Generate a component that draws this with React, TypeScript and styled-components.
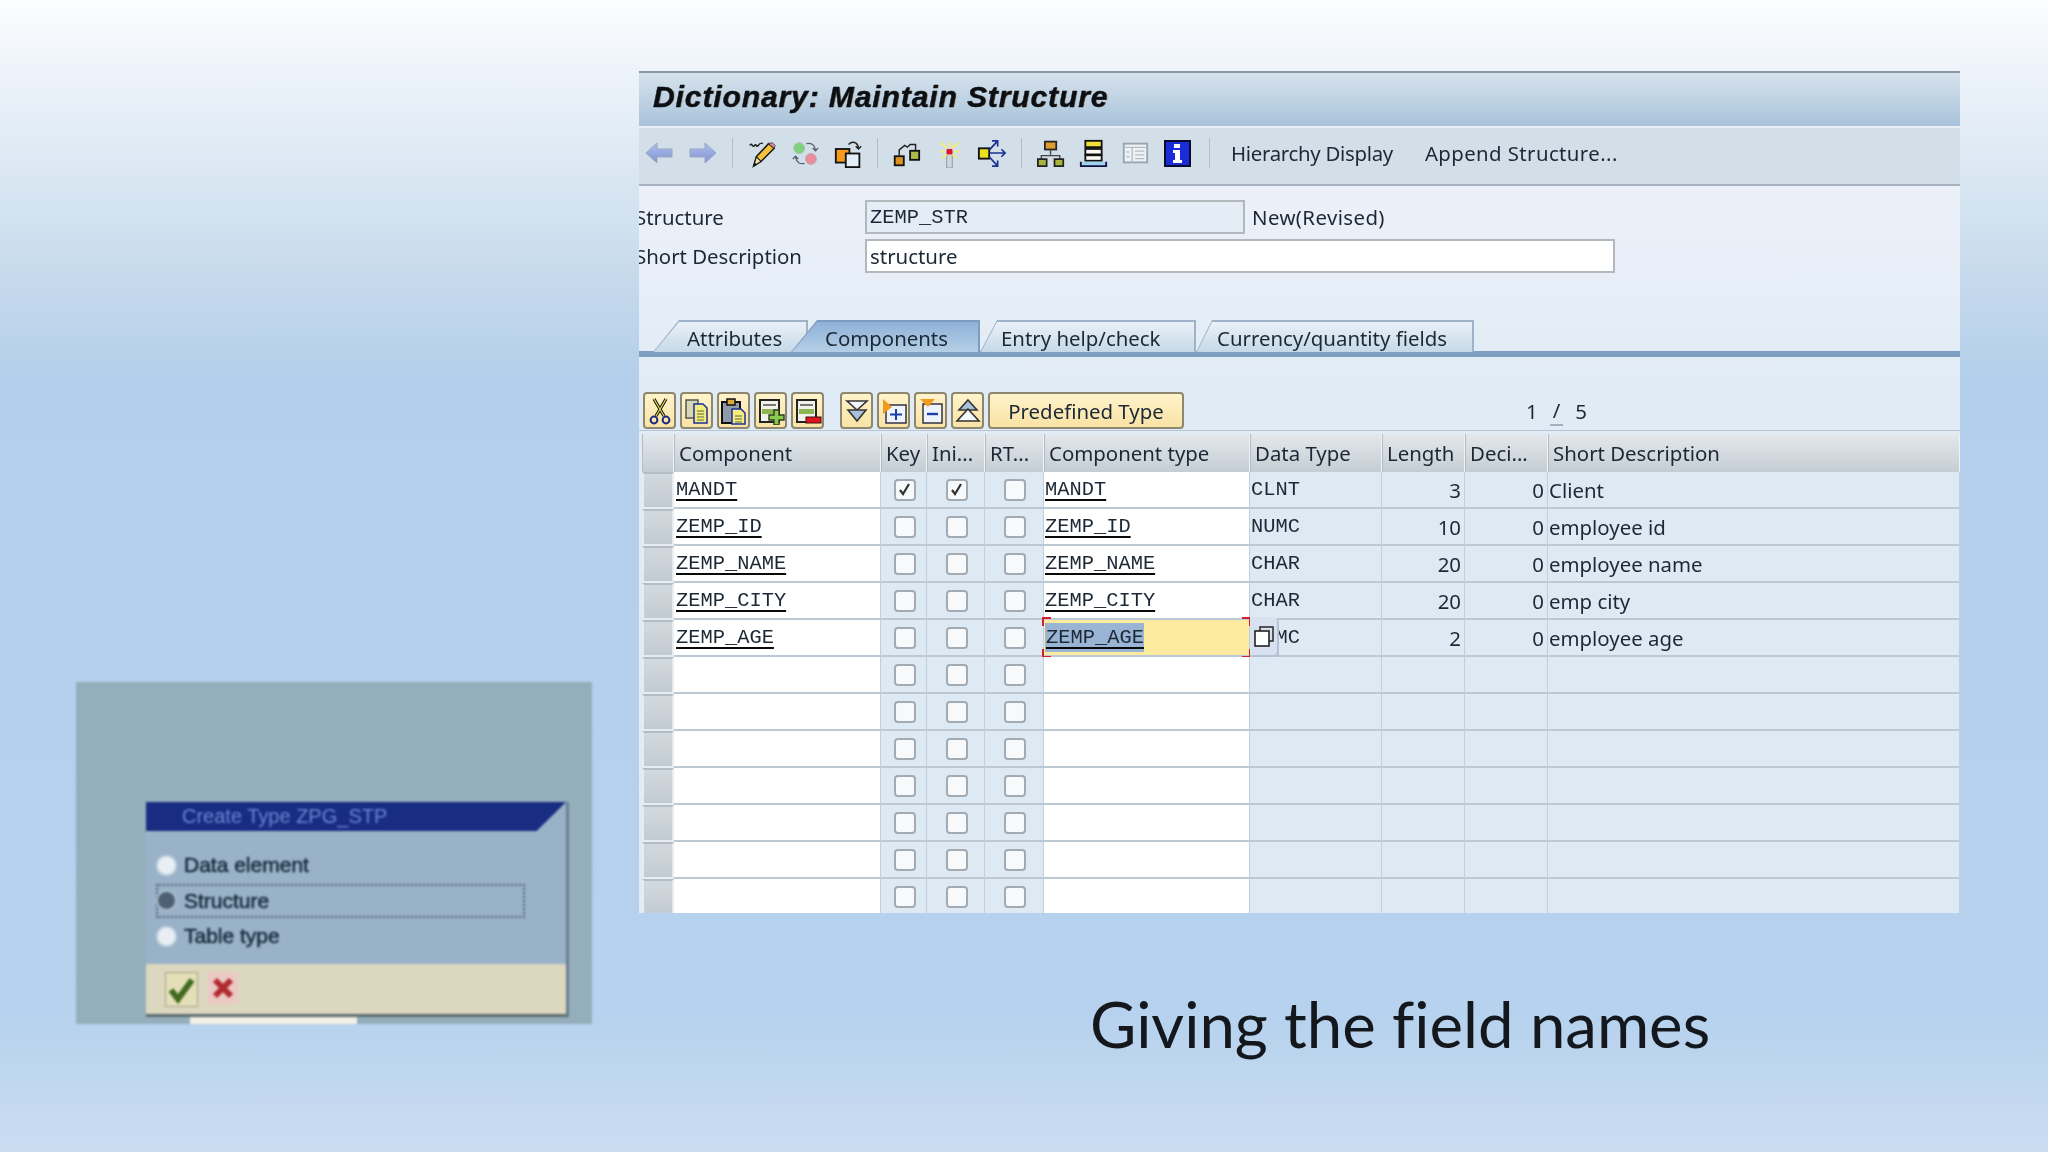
import React from "react";
import styled, { createGlobalStyle } from "styled-components";

const GlobalStyle = createGlobalStyle`
    html, body { margin: 0; padding: 0; }
    body { width: 2048px; height: 1152px; overflow: hidden; }
`;

const Slide = styled.div`
    width: 2048px;
    height: 1152px;
    display: grid;
    grid-template-columns: 639px 1321px;
    overflow: hidden;
    background: linear-gradient(180deg, #fcfdfe 0%, #f0f5fb 5%, #d8e6f2 16%, #c2d7eb 26%, #b3cfeb 33%, #b6d2ee 88%, #cbdcf1 100%);
`;

const LeftColumn = styled.div`
    padding: 682px 0 0 76px;
`;

const RightColumn = styled.div`
    padding-top: 71px;
    display: flex;
    flex-direction: column;
`;

const Caption = styled.div`
    margin: 71px 0 0 451px;
    font: 400 63.5px/80px Lato, "Noto Sans", sans-serif;
    font-variant-ligatures: none;
    color: #14181c;
    white-space: nowrap;
`;

/* blurry embedded picture */
const Picture = styled.div`
    width: 516px;
    height: 342px;
    padding: 120px 23px 0 70px;
    box-sizing: border-box;
    background: #94aebb;
    overflow: hidden;
    filter: blur(1px);
`;

const Dialog = styled.div`
    height: 215px;
    background: #9ab2c7;
    border-right: 3px solid #6b7f92;
    border-bottom: 3px solid #5e6c70;
    box-sizing: border-box;
    display: flex;
    flex-direction: column;
`;

const DialogTitle = styled.div`
    height: 29px;
    padding: 0 0 0 36px;
    background: #182c82;
    clip-path: polygon(0 0, 100% 0, 93% 100%, 0 100%);
    color: #6d86cf;
    font: 400 20px/28px "Liberation Sans", sans-serif;
`;

const RadioList = styled.div`
    flex: 1;
    padding: 17px 0 0 10px;
    display: flex;
    flex-direction: column;
    gap: 1.5px;
`;

const RadioRow = styled.div<{ $focus?: boolean }>`
    height: 34px;
    width: 369px;
    box-sizing: border-box;
    display: flex;
    align-items: center;
    gap: 9px;
    border: 2px dotted ${(p) => (p.$focus ? "#4a5d70" : "transparent")};
    color: #15273a;
    font: 400 21px "Liberation Sans", sans-serif;
    -webkit-text-stroke: 0.5px #15273a;
`;

const Radio = styled.span<{ $on?: boolean }>`
    width: 17px;
    height: 17px;
    border-radius: 50%;
    background: ${(p) => (p.$on ? "#4d6074" : "#e8eef4")};
    box-shadow: 0 0 0 2px ${(p) => (p.$on ? "#a9bccc" : "#c5d4e0")};
`;

const DialogFooter = styled.div`
    height: 50px;
    padding: 8px 0 0 19px;
    box-sizing: border-box;
    background: #dcd8c0;
    display: flex;
    gap: 10px;
`;

const DialogButton = styled.div`
    width: 33px;
    height: 35px;
    background: #e4dfb8;
    border: 1px solid #a3a386;
    box-sizing: border-box;
`;

const PlainButton = styled.div`
    width: 30px;
    height: 32px;
    background: #ecc9c4;
`;

const PictureStub = styled.div`
    width: 167px;
    height: 8px;
    margin-left: 44px;
    background: #f2f0e6;
`;

/* SAP window */
const Panel = styled.div`
    height: 842px;
    overflow: hidden;
    background: linear-gradient(180deg, #edf1f9 12%, #e0ebf5 40%);
    border-top: 2px solid #8a98a6;
    box-sizing: border-box;
    color: #1c2836;
    font: 400 20.4px "Noto Sans", sans-serif;
    filter: blur(0.4px);
`;

const TitleBar = styled.div`
    height: 47px;
    padding: 0 0 6px 14px;
    display: flex;
    align-items: center;
    background: linear-gradient(180deg, #d6e2ed, #a9c3da);
    border-bottom: 2px solid #e9f0f5;
    color: #0c0f14;
    font: italic 700 30px "Liberation Sans", sans-serif;
    letter-spacing: 0.9px;
    -webkit-text-stroke: 0.4px #0c0f14;
    text-shadow: 1px 0 0 rgba(130, 95, 40, 0.45);
`;

const AppToolbar = styled.div`
    height: 50px;
    padding-bottom: 6px;
    display: flex;
    align-items: center;
    background: #d3dfe8;
    border-bottom: 2px solid #a7b3bf;
`;

const ToolGroup = styled.div<{ $gap: number }>`
    display: flex;
    gap: ${(p) => p.$gap}px;
`;

const ToolSlot = styled.span`
    width: 40px;
    height: 32px;
    display: flex;
    align-items: center;
    justify-content: center;
`;

const ToolSep = styled.span<{ $before?: number; $after?: number }>`
    width: 1px;
    height: 30px;
    margin: 0 ${(p) => p.$after ?? 8}px 0 ${(p) => p.$before ?? 8}px;
    background: #b1bfcb;
`;

const ToolText = styled.span<{ $spacing: number }>`
    margin-right: 32px;
    letter-spacing: ${(p) => p.$spacing}px;
    white-space: nowrap;
`;

const Form = styled.div`
    padding-top: 14px;
    display: flex;
    flex-direction: column;
    gap: 5px;
`;

const FormRow = styled.div`
    height: 34px;
    display: flex;
    align-items: center;
`;

const FormLabel = styled.label`
    width: 226px;
    margin: 0 4px 0 -4px;
    flex: none;
    white-space: nowrap;
`;

const Field = styled.div<{ $width: number; $readOnly?: boolean }>`
    width: ${(p) => p.$width}px;
    height: 34px;
    box-sizing: border-box;
    padding-left: 3px;
    display: flex;
    align-items: center;
    border: 2px solid #b3b8bc;
    background: ${(p) => (p.$readOnly ? "#e4edf5" : "#ffffff")};
`;

const FieldNote = styled.span`
    margin-left: 7px;
    letter-spacing: 0.4px;
`;

const Mono = styled.span`
    font: 400 20.4px "Liberation Mono", monospace;
    white-space: nowrap;
`;

const TabStrip = styled.div`
    margin-top: 47px;
    padding-left: 14px;
    height: 32px;
    display: flex;
    border-bottom: 5px solid #7e9fc2;
    box-shadow: inset 0 -1px 0 #7e9fc2;
`;

const Tab = styled.div<{ $width: number; $slant: number; $overlap?: number; $active?: boolean; $pad: number }>`
    position: relative;
    width: ${(p) => p.$width}px;
    height: 32px;
    margin-left: ${(p) => -(p.$overlap ?? 0)}px;
    padding-left: ${(p) => p.$pad}px;
    box-sizing: border-box;
    line-height: 36px;
    white-space: nowrap;
    background: ${(p) => (p.$active ? "#7d9cbf" : "#9eb3c7")};
    clip-path: polygon(0 100%, ${(p) => p.$slant}px 0, 100% 0, 100% 100%);
    z-index: ${(p) => (p.$active ? 2 : 1)};

    &::before {
        content: "";
        position: absolute;
        inset: 2px 2px 0 1px;
        background: ${(p) =>
            p.$active
                ? "linear-gradient(180deg, #8fb2d8, #b5cfe6)"
                : "linear-gradient(180deg, #eaf1f7, #c6d8e8)"};
        clip-path: polygon(0 100%, ${(p) => p.$slant - 1}px 0, 100% 0, 100% 100%);
        z-index: -1;
    }
`;

const GridToolbar = styled.div`
    margin-top: 35px;
    height: 38px;
    padding-left: 4px;
    display: flex;
    gap: 4px;
    border-bottom: 1px solid #b8c6d3;
`;

const YellowButton = styled.button<{ $gapLeft?: number }>`
    width: 33px;
    height: 37px;
    margin-left: ${(p) => p.$gapLeft ?? 0}px;
    padding: 0;
    border: 2px solid #8d8770;
    border-radius: 4px;
    background: linear-gradient(180deg, #fff3cc, #f9e2a4);
    display: flex;
    align-items: center;
    justify-content: center;
`;

const TextButton = styled(YellowButton)`
    width: 196px;
    color: #1c2836;
    font: 400 20.4px "Noto Sans", sans-serif;
`;

const Pager = styled.div`
    margin: 0 373px 0 auto;
    display: flex;
    align-items: center;
    gap: 12px;
`;

const PagerSlash = styled.span`
    border-bottom: 2px solid #9fb0c0;
    padding: 0 3px;
`;

const Table = styled.div`
    margin: 3px 0 0 3px;
`;

const COLUMNS = "32px 207px 46px 58px 59px 206px 132px 83px 83px 1fr";

const HeadRow = styled.div`
    height: 38px;
    display: grid;
    grid-template-columns: ${COLUMNS};
`;

const HeadCell = styled.div`
    padding-left: 4px;
    display: flex;
    align-items: center;
    white-space: nowrap;
    overflow: hidden;
    box-sizing: border-box;
    background: linear-gradient(180deg, #e3e8ec, #c5cdd4);
    border-right: 1px solid #eef2f5;
    border-left: 1px solid #b4bcc4;
`;

const Row = styled.div`
    height: 37px;
    display: grid;
    grid-template-columns: ${COLUMNS};
`;

const Selector = styled.div`
    background: linear-gradient(180deg, #d2d9de, #c3cbd2);
    border: 2px solid #e6ecf1;
    border-top-color: #b4bcc4;
    box-sizing: border-box;
`;

const Cell = styled.div<{ $white?: boolean; $right?: boolean; $center?: boolean; $pad?: number }>`
    position: relative;
    min-width: 0;
    display: flex;
    align-items: center;
    justify-content: ${(p) => (p.$right ? "flex-end" : p.$center ? "center" : "flex-start")};
    padding: 0 ${(p) => (p.$right ? 3 : 0)}px 0 ${(p) => p.$pad ?? 1}px;
    box-sizing: border-box;
    background: ${(p) => (p.$white ? "#ffffff" : "#dde9f3")};
    border-bottom: 2px solid #bcc8d3;
    border-right: 1px solid #c3ced8;
    white-space: nowrap;
`;

const ActiveCell = styled(Cell)`
    background: #fceb9e;
`;

const Link = styled(Mono)`
    text-decoration: underline;
    text-decoration-thickness: 2px;
    text-decoration-skip-ink: none;
    text-underline-offset: 4px;
    text-decoration-color: #0a0a0a;
`;

const Selected = styled(Link)`
    background: #9ab4d4;
    padding: 3px 0 3px 1px;
`;

const Corner = styled.span<{ $x: "left" | "right"; $y: "top" | "bottom" }>`
    position: absolute;
    ${(p) => p.$x}: -2px;
    ${(p) => p.$y}: -3px;
    width: 7px;
    height: 7px;
    border-${(p) => p.$x}: 2px solid #d4202a;
    border-${(p) => p.$y}: 2px solid #d4202a;
`;

const CopyPopup = styled.span`
    position: absolute;
    left: 0;
    top: -3px;
    width: 27px;
    height: 38px;
    display: flex;
    align-items: center;
    justify-content: center;
    background: #d8e1ef;
    border-radius: 0 4px 4px 0;
    box-shadow: 2px 2px 0 #b6c1d4;
    z-index: 3;
`;

const Check = styled.span`
    width: 22px;
    height: 22px;
    box-sizing: border-box;
    display: flex;
    align-items: center;
    justify-content: center;
    background: #f7f9fb;
    border: 2px solid #a2abb4;
    border-radius: 4px;
`;

/* toolbar drawings: size is the drawn size, view the coordinate space of the paths */
const Svg = ({ children, size = 32, view, w }: { children: React.ReactNode; size?: number; view?: number; w?: number }) => (
    <svg width={w ?? size} height={size} viewBox={`0 0 ${view ?? w ?? size} ${view ?? size}`} fill="none">
        {children}
    </svg>
);

const ArrowLeft = () => (
    <Svg>
        <defs>
            <linearGradient id="arr" x1="0" y1="0" x2="0" y2="1">
                <stop offset="0" stopColor="#aebff0" />
                <stop offset="1" stopColor="#7f93d2" />
            </linearGradient>
        </defs>
        <path d="M3 16 14 6v6h15v8H14v6z" fill="url(#arr)" stroke="#9aa7bd" strokeWidth="1" />
    </Svg>
);

const ArrowRight = () => (
    <Svg>
        <path d="M29 16 18 6v6H3v8h15v6z" fill="url(#arr)" stroke="#9aa7bd" strokeWidth="1" />
    </Svg>
);

const Pencil = () => (
    <Svg size={30} view={32}>
        <path d="M3 8c2-4 3 3 5 0s2 3 4 0 3-3 5-2" stroke="#222" strokeWidth="1.6" />
        <path d="M7 30 10 20 23 6l6 5-14 14z" fill="#f7c23c" stroke="#1a1a1a" strokeWidth="1.6" />
        <path d="M7 30l3-10 5 5z" fill="#f3dfae" stroke="#1a1a1a" strokeWidth="1.2" />
        <path d="M7 30l1.2-4 2.6 2.4z" fill="#111" />
        <path d="M23 6l6 5 1-3-3-3z" fill="#e58aa0" stroke="#444" />
    </Svg>
);

const SwapCircles = () => (
    <Svg size={29} view={32}>
        <circle cx="9" cy="10" r="6" fill="#7fd17f" stroke="#a4bfa6" />
        <circle cx="22" cy="22" r="6" fill="#ea8c9a" stroke="#c2a2ac" />
        <path d="M17 5c5-1 9 1 10 7m-3-2 3 3 3-3" stroke="#54606c" strokeWidth="1.4" />
        <path d="M15 27c-5 1-9-1-10-7m3 2-3-3-3 3" stroke="#54606c" strokeWidth="1.4" />
    </Svg>
);

const CopyObject = () => (
    <Svg size={29} view={32}>
        <rect x="2" y="11" width="15" height="15" fill="#f49a1e" stroke="#111" strokeWidth="2" />
        <rect x="13" y="16" width="15" height="15" fill="#e4edf8" stroke="#111" strokeWidth="2" />
        <path d="M16 6c4-4 10-3 11 4m-3-2 3 3 3-3" stroke="#222" strokeWidth="1.6" />
    </Svg>
);

const ObjectLink = () => (
    <Svg size={29} view={32}>
        <rect x="3" y="19" width="10" height="10" fill="#dc9220" stroke="#111" strokeWidth="2" />
        <rect x="20" y="13" width="10" height="10" fill="#a8bd4c" stroke="#111" strokeWidth="2" />
        <path d="M8 18V12l6-5 3 2 3-3h6v6" stroke="#222" strokeWidth="1.6" />
    </Svg>
);

const Wand = () => (
    <Svg size={29} view={32}>
        <rect x="13" y="13" width="6" height="19" fill="#cfd6dc" stroke="#87919c" />
        <rect x="13" y="11" width="6" height="6" fill="#e5122b" />
        <path d="M16 3v6M6 4l7 6M26 4l-7 6M5 14h6M21 14h6M8 21l5-4M24 21l-5-4" stroke="#f3ee6a" strokeWidth="2" />
    </Svg>
);

const ArrowsOut = () => (
    <Svg size={30} view={32}>
        <rect x="2" y="11" width="11" height="11" fill="#e9e21c" stroke="#111" strokeWidth="2" />
        <path d="M13 16h17m-4-4 4 4-4 4M13 13 22 3m-6 0h6v6M13 20l9 10m-6 0h6v-6" stroke="#1a2f96" strokeWidth="1.8" />
    </Svg>
);

const Hierarchy = () => (
    <Svg size={28} view={32}>
        <rect x="9" y="3" width="13" height="9" fill="#dc9c30" stroke="#222" strokeWidth="2" />
        <path d="M15.5 12v6M5 24v-5h21v5" stroke="#444" strokeWidth="1.6" />
        <rect x="1" y="23" width="10" height="8" fill="#a8b43c" stroke="#222" strokeWidth="2" />
        <rect x="20" y="23" width="10" height="8" fill="#a8b43c" stroke="#222" strokeWidth="2" />
    </Svg>
);

const Stack = () => (
    <Svg size={29} view={32}>
        <rect x="7" y="2" width="18" height="7" fill="#f1e03c" stroke="#111" strokeWidth="2" />
        <rect x="7" y="11" width="18" height="6" fill="#fbfbf4" stroke="#111" strokeWidth="2" />
        <rect x="7" y="18" width="18" height="6" fill="#fbfbf4" stroke="#111" strokeWidth="2" />
        <path d="M2 25v5h28v-5" fill="#9fd4ea" stroke="#114" strokeWidth="2" />
    </Svg>
);

const Layout = () => (
    <Svg size={30} view={32}>
        <rect x="4" y="6" width="25" height="20" fill="#edf2f6" stroke="#98a4ae" strokeWidth="2" />
        <path d="M4 10h25M13 10v16M16 14h10M16 18h10M16 22h10M7 15h3M7 20h3" stroke="#b4bec6" strokeWidth="1.5" />
    </Svg>
);

const Info = () => (
    <Svg size={32}>
        <rect x="4" y="4" width="25" height="25" fill="#1a2cd8" stroke="#0a0a2a" strokeWidth="2" />
        <path d="M13 7h6v4h-6zM12 13h7v10h2v3H12v-3h2v-7h-2z" fill="#fff" />
    </Svg>
);

const Scissors = () => (
    <Svg size={28}>
        <path d="M8 2 18 19M20 2 10 19" stroke="#111" strokeWidth="3.2" />
        <path d="M8 2 18 19M20 2 10 19" stroke="#e4e04c" strokeWidth="1.2" />
        <circle cx="8" cy="23" r="3.4" stroke="#1a2a78" strokeWidth="2" />
        <circle cx="20" cy="23" r="3.4" stroke="#1a2a78" strokeWidth="2" />
    </Svg>
);

const Docs = () => (
    <Svg size={28}>
        <rect x="3" y="3" width="12" height="18" fill="#d6d8b4" stroke="#555" strokeWidth="1.5" />
        <path d="M11 7h9l4 4v15H11z" fill="#f6ec7a" stroke="#1c2fa0" strokeWidth="1.5" />
        <path d="M14 14h7M14 17h7M14 20h7M14 23h7" stroke="#5b6a40" />
    </Svg>
);

const Paste = () => (
    <Svg size={28}>
        <rect x="2" y="5" width="18" height="21" fill="#8e9aa8" stroke="#111" strokeWidth="2" />
        <rect x="7" y="2" width="8" height="6" fill="#e0a83c" stroke="#111" strokeWidth="1.5" />
        <path d="M12 12h9l4 4v11H12z" fill="#f6ec7a" stroke="#1c2fa0" strokeWidth="1.5" />
        <path d="M15 19h7M15 22h7M15 25h7" stroke="#5b6a40" />
    </Svg>
);

const RowInsert = () => (
    <Svg size={28}>
        <rect x="3" y="3" width="19" height="22" fill="#f2f2ea" stroke="#222" strokeWidth="2" />
        <path d="M6 8h13" stroke="#777" strokeWidth="2" />
        <rect x="5" y="12" width="15" height="5" fill="#8db552" />
        <path d="M17 13h5v5h5v5h-5v5h-5v-5h-5v-5h5z" fill="#8ccb4e" stroke="#2c3c20" strokeWidth="1.4" />
    </Svg>
);

const RowDelete = () => (
    <Svg size={28}>
        <rect x="3" y="3" width="19" height="22" fill="#f2f2ea" stroke="#222" strokeWidth="2" />
        <path d="M6 8h13" stroke="#777" strokeWidth="2" />
        <rect x="5" y="12" width="15" height="5" fill="#8db552" />
        <rect x="12" y="20" width="15" height="6" fill="#e01420" stroke="#3a1010" />
    </Svg>
);

const ChevronsDown = () => (
    <Svg size={28}>
        <path d="M4 4h20l-10 9z" fill="#f4f7fb" stroke="#333" strokeWidth="1.6" />
        <path d="M5 13h18l-9 11z" fill="#a9c0dc" stroke="#333" strokeWidth="1.6" />
    </Svg>
);

const ChevronsUp = () => (
    <Svg size={28}>
        <path d="M14 3 23 13H5z" fill="#a9c0dc" stroke="#333" strokeWidth="1.6" />
        <path d="M14 12 25 24H3z" fill="#f4f7fb" stroke="#333" strokeWidth="1.6" />
    </Svg>
);

const ExpandBox = () => (
    <Svg size={28}>
        <rect x="6" y="8" width="20" height="18" fill="#eef4fb" stroke="#334" strokeWidth="1.5" />
        <path d="M16 12v11M10 17.5h12" stroke="#1b3fa8" strokeWidth="2" />
        <path d="M3 2l9 8-9 7z" fill="#f29a1c" />
    </Svg>
);

const CollapseBox = () => (
    <Svg size={28}>
        <rect x="6" y="7" width="19" height="19" fill="#eef4fb" stroke="#334" strokeWidth="1.5" />
        <path d="M10 17h11" stroke="#1b3fa8" strokeWidth="2.4" />
        <path d="M3 2h15l-7 8z" fill="#f29a1c" />
    </Svg>
);

const Tick = () => (
    <Svg size={15}>
        <path d="M3 8l3 4 6-10" stroke="#333" strokeWidth="2.2" />
    </Svg>
);

const CopyGlyph = () => (
    <Svg size={22}>
        <rect x="7" y="2" width="13" height="14" fill="#d6dfea" stroke="#333" strokeWidth="1.6" />
        <rect x="2" y="6" width="14" height="15" fill="#fff" stroke="#222" strokeWidth="1.6" />
    </Svg>
);

const rows = [
    { name: "MANDT", key: true, ini: true, type: "MANDT", data: "CLNT", len: "3", text: "Client" },
    { name: "ZEMP_ID", type: "ZEMP_ID", data: "NUMC", len: "10", text: "employee id" },
    { name: "ZEMP_NAME", type: "ZEMP_NAME", data: "CHAR", len: "20", text: "employee name" },
    { name: "ZEMP_CITY", type: "ZEMP_CITY", data: "CHAR", len: "20", text: "emp city" },
    { name: "ZEMP_AGE", type: "ZEMP_AGE", data: "NUMC", len: "2", text: "employee age", active: true },
    ...Array.from({ length: 7 }, () => ({ name: "", type: "", data: "", len: "", text: "" })),
] as {
    name: string;
    key?: boolean;
    ini?: boolean;
    type: string;
    data: string;
    len: string;
    text: string;
    active?: boolean;
}[];

const headers = ["", "Component", "Key", "Ini...", "RT...", "Component type", "Data Type", "Length", "Deci...", "Short Description"];

const CheckCell = ({ on }: { on?: boolean }) => (
    <Cell $center $pad={2}>
        <Check>{on && <Tick />}</Check>
    </Cell>
);

const DialogPicture = () => (
    <Picture>
        <Dialog>
            <DialogTitle>Create Type ZPG_STP</DialogTitle>
            <RadioList>
                <RadioRow>
                    <Radio />
                    Data element
                </RadioRow>
                <RadioRow $focus>
                    <Radio $on />
                    Structure
                </RadioRow>
                <RadioRow>
                    <Radio />
                    Table type
                </RadioRow>
            </RadioList>
            <DialogFooter>
                <DialogButton>
                    <Svg size={32} w={30}>
                        <path d="M5 17l7 9L26 7" stroke="#3f6a1e" strokeWidth="6" />
                    </Svg>
                </DialogButton>
                <PlainButton>
                    <Svg size={32} w={30}>
                        <path d="M7 8l16 16M23 8 7 24" stroke="#b02a30" strokeWidth="6" />
                    </Svg>
                </PlainButton>
            </DialogFooter>
        </Dialog>
        <PictureStub />
    </Picture>
);

export default function App() {
    return (
        <>
            <GlobalStyle />
            <Slide>
                <LeftColumn>
                    <DialogPicture />
                </LeftColumn>
                <RightColumn>
                    <Panel>
                        <TitleBar>Dictionary: Maintain Structure</TitleBar>
                        <AppToolbar>
                            <ToolGroup $gap={4}>
                                <ToolSlot><ArrowLeft /></ToolSlot>
                                <ToolSlot><ArrowRight /></ToolSlot>
                            </ToolGroup>
                            <ToolSep $before={9} $after={9} />
                            <ToolGroup $gap={3}>
                                <ToolSlot><Pencil /></ToolSlot>
                                <ToolSlot><SwapCircles /></ToolSlot>
                                <ToolSlot><CopyObject /></ToolSlot>
                            </ToolGroup>
                            <ToolSep $before={9} />
                            <ToolGroup $gap={3}>
                                <ToolSlot><ObjectLink /></ToolSlot>
                                <ToolSlot><Wand /></ToolSlot>
                                <ToolSlot><ArrowsOut /></ToolSlot>
                            </ToolGroup>
                            <ToolSep $before={9} $after={9} />
                            <ToolGroup $gap={2}>
                                <ToolSlot><Hierarchy /></ToolSlot>
                                <ToolSlot><Stack /></ToolSlot>
                                <ToolSlot><Layout /></ToolSlot>
                                <ToolSlot><Info /></ToolSlot>
                            </ToolGroup>
                            <ToolSep $before={12} $after={21} />
                            <ToolText $spacing={-0.3}>Hierarchy Display</ToolText>
                            <ToolText $spacing={0.4}>Append Structure...</ToolText>
                        </AppToolbar>
                        <Form>
                            <FormRow>
                                <FormLabel>Structure</FormLabel>
                                <Field $width={380} $readOnly>
                                    <Mono>ZEMP_STR</Mono>
                                </Field>
                                <FieldNote>New(Revised)</FieldNote>
                            </FormRow>
                            <FormRow>
                                <FormLabel>Short Description</FormLabel>
                                <Field $width={750}>structure</Field>
                            </FormRow>
                        </Form>
                        <TabStrip>
                            <Tab $width={155} $slant={26} $pad={34}>Attributes</Tab>
                            <Tab $width={189} $slant={26} $overlap={17} $pad={34} $active>Components</Tab>
                            <Tab $width={216} $slant={17} $pad={21}>Entry help/check</Tab>
                            <Tab $width={278} $slant={16} $pad={21}>Currency/quantity fields</Tab>
                        </TabStrip>
                        <GridToolbar>
                            <YellowButton><Scissors /></YellowButton>
                            <YellowButton><Docs /></YellowButton>
                            <YellowButton><Paste /></YellowButton>
                            <YellowButton><RowInsert /></YellowButton>
                            <YellowButton><RowDelete /></YellowButton>
                            <YellowButton $gapLeft={12}><ChevronsDown /></YellowButton>
                            <YellowButton><ExpandBox /></YellowButton>
                            <YellowButton><CollapseBox /></YellowButton>
                            <YellowButton><ChevronsUp /></YellowButton>
                            <TextButton>Predefined Type</TextButton>
                            <Pager>
                                <span>1</span>
                                <PagerSlash>/</PagerSlash>
                                <span>5</span>
                            </Pager>
                        </GridToolbar>
                        <Table>
                            <HeadRow>
                                {headers.map((h) => (
                                    <HeadCell key={h}>{h}</HeadCell>
                                ))}
                            </HeadRow>
                            {rows.map((r, i) => {
                                const TypeCell = r.active ? ActiveCell : Cell;
                                return (
                                    <Row key={i}>
                                        <Selector />
                                        <Cell $white $pad={2}>
                                            {r.name && <Link>{r.name}</Link>}
                                        </Cell>
                                        <CheckCell on={r.key} />
                                        <CheckCell on={r.ini} />
                                        <CheckCell />
                                        <TypeCell $white={!r.active} $pad={1}>
                                            {r.active ? <Selected>{r.type}</Selected> : r.type && <Link>{r.type}</Link>}
                                            {r.active && (
                                                <>
                                                    <Corner $x="left" $y="top" />
                                                    <Corner $x="right" $y="top" />
                                                    <Corner $x="left" $y="bottom" />
                                                    <Corner $x="right" $y="bottom" />
                                                </>
                                            )}
                                        </TypeCell>
                                        <Cell>
                                            <Mono>{r.data}</Mono>
                                            {r.active && (
                                                <CopyPopup>
                                                    <CopyGlyph />
                                                </CopyPopup>
                                            )}
                                        </Cell>
                                        <Cell $right>{r.len}</Cell>
                                        <Cell $right>{r.text && "0"}</Cell>
                                        <Cell $pad={1}>{r.text}</Cell>
                                    </Row>
                                );
                            })}
                        </Table>
                    </Panel>
                    <Caption>Giving the field names</Caption>
                </RightColumn>
            </Slide>
        </>
    );
}
